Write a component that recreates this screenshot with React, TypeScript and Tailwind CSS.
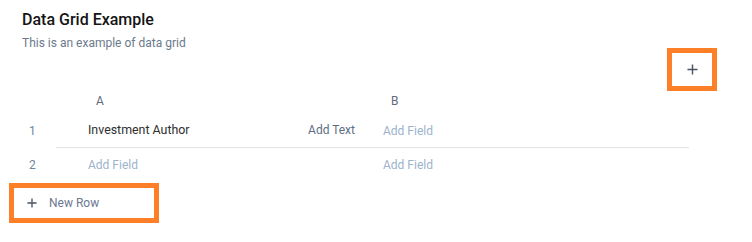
import React from "react";

function Plus({ className }: { className?: string }) {
  return (
    <svg viewBox="0 0 12 12" className={className} fill="none" stroke="currentColor" strokeWidth="1.6" strokeLinecap="butt">
      <path d="M6 0.5V11.5M0.5 6H11.5" />
    </svg>
  );
}

export default function App() {
  const font = { fontFamily: "Roboto, 'Noto Sans', Arial, sans-serif" };
  return (
    <div className="w-[752px] h-[242px] bg-white overflow-hidden font-['Roboto',sans-serif]" style={font}>
      <div className="pl-[22px] pt-[10px]">
        <h1 className="text-[16px] leading-[20px] font-medium text-[#141414]">Data Grid Example</h1>
        <p className="mt-[5px] text-[12px] leading-[16px] text-[#6b7a8c]">This is an example of data grid</p>
      </div>
      <div className="flex justify-end pr-[35px] -mt-[3px]">
        <button className="w-[50px] h-[43px] border-[5px] border-[#fd7f28] flex items-center justify-center text-[#4a5466]">
          <Plus className="w-[11px] h-[11px]" />
        </button>
      </div>
      <div className="pl-[22px] text-[12px]">
        <div className="flex h-[19px] items-center text-[#5f6b7a]">
          <div className="w-[34px]" />
          <div className="w-[315px] pl-[40px]">A</div>
          <div className="pl-[20px]">B</div>
        </div>
        <div className="flex h-[38px] pt-[4px]">
          <div className="w-[34px] pl-[7px] flex items-center text-[#6f86a2]">1</div>
          <div className="w-[633px] flex items-center border-b border-[#e1e3e6]">
            <div className="w-[315px] pl-[32px] pr-[16px] flex justify-between">
              <span className="text-[#2e2e2e] text-[12.4px]">Investment Author</span>
              <span className="text-[#5d6e82]">Add Text</span>
            </div>
            <div className="pl-[12px] text-[#9cb3cb]">Add Field</div>
          </div>
        </div>
        <div className="flex h-[33px]">
          <div className="w-[34px] pl-[7px] flex items-center text-[#6f86a2]">2</div>
          <div className="w-[633px] flex items-center">
            <div className="w-[315px] pl-[32px] text-[#9cb3cb]">Add Field</div>
            <div className="pl-[12px] text-[#9cb3cb]">Add Field</div>
          </div>
        </div>
      </div>
      <div className="ml-[9px] mt-[2px] w-[150px] h-[40px] border-[5px] border-[#fd7f28] flex items-center pl-[13px]">
        <Plus className="w-[10px] h-[10px] text-[#4a5466]" />
        <span className="ml-[12px] text-[12px] text-[#6b7790]">New Row</span>
      </div>
    </div>
  );
}
